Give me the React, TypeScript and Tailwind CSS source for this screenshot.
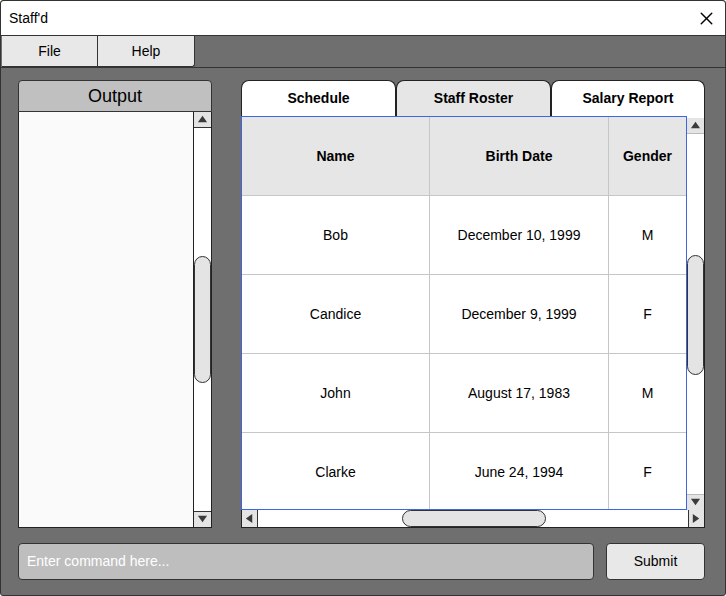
import { X } from "lucide-react";

const rows = [
  { name: "Bob", birth: "December 10, 1999", gender: "M" },
  { name: "Candice", birth: "December 9, 1999", gender: "F" },
  { name: "John", birth: "August 17, 1983", gender: "M" },
  { name: "Clarke", birth: "June 24, 1994", gender: "F" },
];

function Arrow({ dir }: { dir: "up" | "down" | "left" | "right" }) {
  const pts = {
    up: "1,9 6,2 11,9",
    down: "1,2 6,9 11,2",
    left: "9,1 2,6 9,11",
    right: "2,1 9,6 2,11",
  }[dir];
  return (
    <svg width="11" height="11" viewBox="0 0 12 12">
      <polygon points={pts} fill="#3a3a3a" />
    </svg>
  );
}

function ArrowBox({ dir, className }: { dir: "up" | "down" | "left" | "right"; className: string }) {
  return (
    <div className={`shrink-0 flex items-center justify-center bg-[#e4e4e4] border-[#333] ${className}`}>
      <Arrow dir={dir} />
    </div>
  );
}

export default function App() {
  return (
    <div
      className="w-[726px] h-[596px] bg-[#6f6f6f] border border-[#333] rounded-[3px] flex flex-col overflow-hidden text-black"
      style={{ fontFamily: '"Liberation Sans", Arial, sans-serif' }}
    >
      {/* Title bar */}
      <div className="h-[35px] shrink-0 bg-white border-b border-[#333] rounded-t-[3px] flex items-center justify-between pl-[8px] pr-[8px]">
        <span className="text-[14px]">Staff'd</span>
        <X size={21} strokeWidth={1.6} className="text-black" />
      </div>

      {/* Menu */}
      <div className="h-[32px] shrink-0 flex border-b border-[#333]">
        <div className="ml-[1px] w-[96px] bg-[#e8e8e8] border-r border-b border-[#333] flex items-center justify-center text-[14px]">
          File
        </div>
        <div className="w-[97px] bg-[#e8e8e8] border-r border-b border-[#333] rounded-br-[3px] flex items-center justify-center text-[14px]">
          Help
        </div>
      </div>

      {/* Body */}
      <div className="flex-1 min-h-0 flex flex-col pt-[12px] pl-[17px] pr-[20px] pb-[14px]">
        <div className="flex gap-[29px] h-[448px] shrink-0">
          {/* Output panel */}
          <div className="w-[195px] flex flex-col">
            <div className="h-[32px] shrink-0 bg-[#c0c0c0] border border-[#333] rounded-t-[4px] flex items-center justify-center text-[18px]">
              Output
            </div>
            <div className="flex-1 min-h-0 flex bg-[#fafafa] border border-t-0 border-[#222]">
              <div className="flex-1" />
              <div className="w-[18px] bg-white border-l border-[#222] flex flex-col">
                <ArrowBox dir="up" className="h-[16px] border-b" />
                <div className="flex-1 flex flex-col pt-[128px]">
                  <div className="h-[127px] bg-[#e4e4e4] border border-[#333] rounded-full" />
                </div>
                <ArrowBox dir="down" className="h-[16px] border-t" />
              </div>
            </div>
          </div>

          {/* Tabs panel */}
          <div className="flex-1 min-h-0 flex flex-col">
            <div className="h-[36px] shrink-0 flex">
              <div className="w-[155px] bg-white border border-b-0 border-[#222] rounded-t-[8px] flex items-center justify-center text-[14px] font-bold">
                Schedule
              </div>
              <div className="w-[155px] bg-[#e6e6e6] border border-b-0 border-[#222] rounded-t-[8px] flex items-center justify-center text-[14px] font-bold">
                Staff Roster
              </div>
              <div className="w-[154px] bg-white border border-b-0 border-[#222] rounded-t-[8px] flex items-center justify-center text-[14px] font-bold">
                Salary Report
              </div>
            </div>

            <div className="flex-1 min-h-0 flex flex-col bg-white border-x border-b border-[#222]">
              <div className="flex-1 min-h-0 flex">
                <div className="flex-1 min-h-0 -ml-[1px] border border-[#3d66e0] overflow-hidden">
                  <div className="grid grid-cols-[188px_179px_1fr]">
                    {["Name", "Birth Date", "Gender"].map((h, i) => (
                      <div
                        key={h}
                        className={`h-[79px] bg-[#e6e6e6] border-b border-[#c6c6c6] flex items-center justify-center text-[14px] font-bold ${i < 2 ? "border-r" : ""}`}
                      >
                        {h}
                      </div>
                    ))}
                    {rows.map((r) => (
                      <>
                        <div key={r.name + "n"} className="h-[79px] border-b border-r border-[#c6c6c6] flex items-center justify-center text-[14px]">
                          {r.name}
                        </div>
                        <div key={r.name + "b"} className="h-[79px] border-b border-r border-[#c6c6c6] flex items-center justify-center text-[14px]">
                          {r.birth}
                        </div>
                        <div key={r.name + "g"} className="h-[79px] border-b border-[#c6c6c6] flex items-center justify-center text-[14px]">
                          {r.gender}
                        </div>
                      </>
                    ))}
                  </div>
                </div>
                <div className="w-[17px] flex flex-col bg-white">
                  <div className="h-[2px] shrink-0" />
                  <ArrowBox dir="up" className="h-[16px] border-b border-[#bbb]" />
                  <div className="flex-1 flex flex-col pt-[121px]">
                    <div className="h-[120px] bg-[#e4e4e4] border border-[#333] rounded-full" />
                  </div>
                  <ArrowBox dir="down" className="h-[16px] border-t border-[#bbb]" />
                </div>
              </div>
              <div className="h-[17px] shrink-0 flex bg-white">
                <ArrowBox dir="left" className="w-[16px] border-r" />
                <div className="flex-1 flex pl-[144px]">
                  <div className="w-[144px] bg-[#e4e4e4] border border-[#333] rounded-full" />
                </div>
                <ArrowBox dir="right" className="w-[16px] border-l" />
              </div>
            </div>
          </div>
        </div>

        {/* Command row */}
        <div className="mt-[15px] h-[37px] shrink-0 flex gap-[12px]">
          <div className="flex-1 bg-[#bebebe] border border-[#333] rounded-[4px] flex items-center pl-[8px] text-[14px] text-white">
            Enter command here...
          </div>
          <div className="w-[99px] bg-[#e8e8e8] border border-[#333] rounded-[4px] flex items-center justify-center text-[14px]">
            Submit
          </div>
        </div>
      </div>
    </div>
  );
}
